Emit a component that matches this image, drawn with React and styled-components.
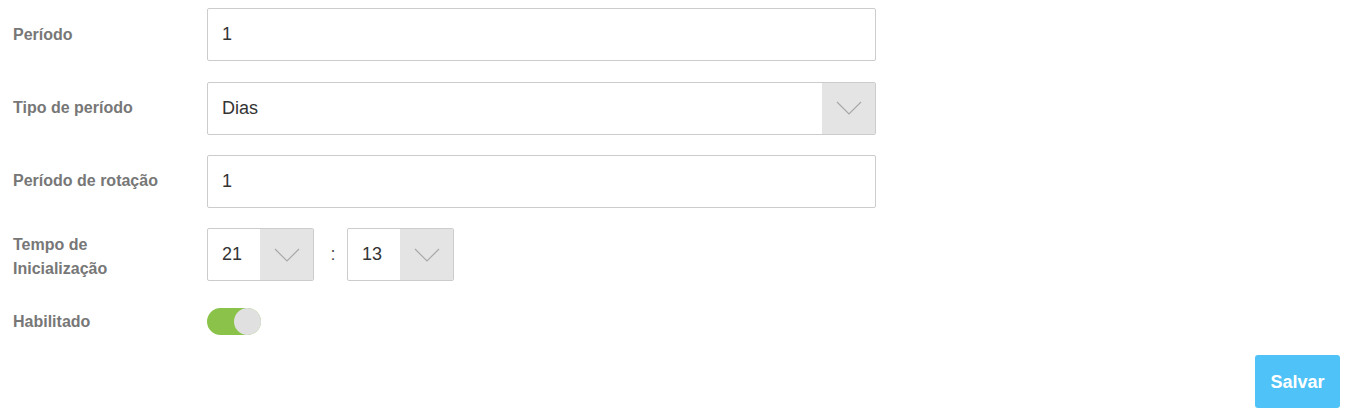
import React from "react";
import styled, { createGlobalStyle } from "styled-components";

const Global = createGlobalStyle`
  html, body { margin: 0; padding: 0; background: #fff; }
  body { font-family: "Liberation Sans", Arial, sans-serif; }
  * { box-sizing: border-box; }
`;

const Page = styled.div`
  width: 1347px;
  height: 420px;
  padding: 8px 7px 0 13px;
  display: flex;
  flex-direction: column;
`;

const Form = styled.div`
  display: flex;
  flex-direction: column;
  gap: 20px;
`;

const Row = styled.div`
  display: grid;
  grid-template-columns: 194px 669px;
  align-items: center;
  height: ${(p) => p.$h || "53.4px"};
`;

const Label = styled.div`
  font-size: 16px;
  font-weight: bold;
  color: #777;
  line-height: 24px;
  width: 170px;
  padding-top: ${(p) => p.$shift || "0"};
`;

const Input = styled.div`
  height: 53px;
  border: 1px solid #ccc;
  border-radius: 2px;
  background: #fff;
  display: flex;
  align-items: center;
  padding-left: 14px;
  font-size: 18px;
  color: #333;
`;

const Select = styled.div`
  height: 53px;
  width: ${(p) => p.$w || "100%"};
  border: 1px solid #ccc;
  border-radius: 2px;
  background: #fff;
  display: flex;
  align-items: stretch;
  overflow: hidden;
`;

const SelectValue = styled.div`
  flex: 1;
  display: flex;
  align-items: center;
  padding-left: 14px;
  font-size: 18px;
  color: #333;
`;

const Arrow = styled.div`
  width: 53px;
  background: #e4e4e4;
  display: flex;
  align-items: center;
  justify-content: center;
`;

const TimeGroup = styled.div`
  display: flex;
  align-items: center;
`;

const Colon = styled.span`
  width: 33px;
  padding-left: 5px;
  text-align: center;
  font-size: 18px;
  color: #555;
`;

const Toggle = styled.div`
  width: 54px;
  height: 27px;
  border-radius: 14px;
  background: #8bc34a;
  display: flex;
  justify-content: flex-end;
`;

const Knob = styled.div`
  width: 27px;
  height: 27px;
  border-radius: 50%;
  background: #e0e0e0;
`;

const Footer = styled.div`
  display: flex;
  justify-content: flex-end;
  margin-top: 13px;
`;

const Button = styled.button`
  width: 85px;
  height: 53px;
  border: none;
  border-radius: 3px;
  background: #4fc3f7;
  color: #fff;
  font-family: "Liberation Sans", Arial, sans-serif;
  font-size: 18px;
  font-weight: bold;
  padding: 3px 0 0;
  cursor: pointer;
`;

const Chevron = () => (
  <svg width="26" height="14" viewBox="0 0 26 14">
    <polyline points="1,1 13,13 25,1" fill="none" stroke="#a8a8a8" strokeWidth="1.2" />
  </svg>
);

export default function App() {
  return (
    <>
      <Global />
      <Page>
        <Form>
          <Row>
            <Label>Período</Label>
            <Input>1</Input>
          </Row>
          <Row>
            <Label>Tipo de período</Label>
            <Select>
              <SelectValue>Dias</SelectValue>
              <Arrow><Chevron /></Arrow>
            </Select>
          </Row>
          <Row>
            <Label>Período de rotação</Label>
            <Input>1</Input>
          </Row>
          <Row>
            <Label $shift="5px">Tempo de Inicialização</Label>
            <TimeGroup>
              <Select $w="107px">
                <SelectValue>21</SelectValue>
                <Arrow><Chevron /></Arrow>
              </Select>
              <Colon>:</Colon>
              <Select $w="107px">
                <SelectValue>13</SelectValue>
                <Arrow><Chevron /></Arrow>
              </Select>
            </TimeGroup>
          </Row>
          <Row $h="40px">
            <Label>Habilitado</Label>
            <Toggle><Knob /></Toggle>
          </Row>
        </Form>
        <Footer>
          <Button>Salvar</Button>
        </Footer>
      </Page>
    </>
  );
}
